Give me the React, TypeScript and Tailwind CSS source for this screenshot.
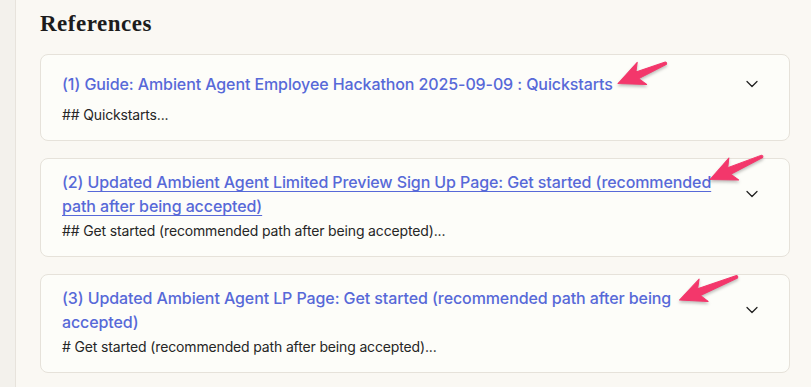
import React from "react";
import { ChevronDown } from "lucide-react";

type Ref = { n: number; title: string; summary: string; underline?: boolean };

const refs: Ref[] = [
  { n: 1, title: "Guide: Ambient Agent Employee Hackathon 2025-09-09 : Quickstarts", summary: "## Quickstarts..." },
  {
    n: 2,
    title: "Updated Ambient Agent Limited Preview Sign Up Page: Get started (recommended path after being accepted)",
    summary: "## Get started (recommended path after being accepted)...",
    underline: true,
  },
  {
    n: 3,
    title: "Updated Ambient Agent LP Page: Get started (recommended path after being accepted)",
    summary: "# Get started (recommended path after being accepted)...",
  },
];

function Arrow({ x, y, angle, len }: { x: number; y: number; angle: number; len: number }) {
  return (
    <g transform={`translate(${x} ${y}) rotate(${angle})`}>
      <path
        d={`M0 0 L26 -12 L21 -3.6 L${len} -1.3 Q${len + 1.5} 0 ${len} 1.3 L21 3.6 L26 12 Z`}
        fill="#f3376b"
        stroke="#f3376b"
        strokeWidth="1"
        strokeLinejoin="round"
      />
    </g>
  );
}

export default function App() {
  return (
    <div className="relative flex h-[387px] w-[811px] overflow-hidden bg-[#faf8f3]">
      <div className="w-[16px] shrink-0 border-r border-[#e7e3dc] bg-[#f3f1ec]" />
      <div className="flex-1 pl-[24px] pr-[21px] pt-[10px]">
        <h2
          className="text-[23px] font-bold leading-[28px] tracking-[0.5px] text-[#1c1c1c]"
          style={{ fontFamily: '"Liberation Serif", "DejaVu Serif", serif' }}
        >
          References
        </h2>
        <div className="mt-[16px] flex flex-col gap-[17px]" style={{ fontFamily: "Inter, 'Noto Sans', sans-serif" }}>
          {refs.map((r) => (
            <div key={r.n} className="rounded-lg border border-[#e6e2da] bg-[#fdfdf9] pb-[15px] pl-[21px] pr-[21px] pt-[11px]">
              <div className="flex items-center gap-3">
                <div className="flex-1 text-[16px] font-medium leading-6 tracking-[-0.1px] text-[#5769d8]">
                  ({r.n}){" "}
                  <span className={r.underline ? "underline underline-offset-[3px]" : ""}>{r.title}</span>
                </div>
                <div className="flex h-9 w-8 shrink-0 items-center justify-center text-[#222]">
                  <ChevronDown size={20} strokeWidth={1.5} />
                </div>
              </div>
              <div className="mt-[3px] text-[14px] leading-5 tracking-[-0.15px] text-[#262626]">{r.summary}</div>
            </div>
          ))}
        </div>
      </div>
      <svg className="pointer-events-none absolute left-0 top-0" width="811" height="387" style={{ filter: "drop-shadow(0px 2px 1.5px rgba(0,0,0,0.25))" }}>
        <Arrow x={618} y={83.5} angle={-23} len={52} />
        <Arrow x={710} y={179.5} angle={-24} len={57} />
        <Arrow x={679.5} y={300} angle={-22} len={62} />
      </svg>
    </div>
  );
}
